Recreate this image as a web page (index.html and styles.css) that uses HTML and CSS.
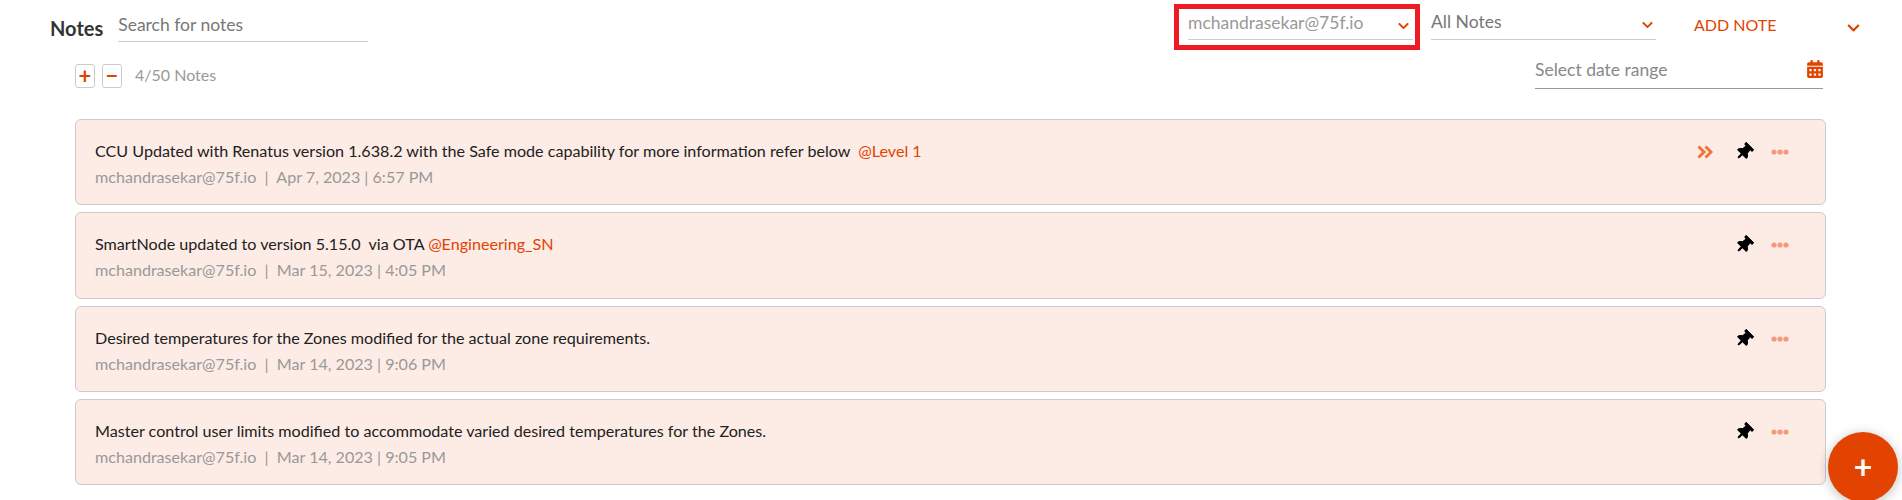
FILE: index.html
```html
<!DOCTYPE html>
<html lang="en">
<head>
  <meta charset="UTF-8">
  <title>Notes</title>
  <link rel="stylesheet" href="styles.css">
</head>
<body>
  <svg class="icon-defs" aria-hidden="true">
    <symbol id="chevron" viewBox="0 0 448 512"><path d="M207.029 381.476L12.686 187.132c-9.373-9.373-9.373-24.569 0-33.941l22.667-22.667c9.357-9.357 24.522-9.375 33.901-.04L224 284.505l154.745-154.021c9.379-9.335 24.544-9.317 33.901.04l22.667 22.667c9.373 9.373 9.373 24.569 0 33.941L240.971 381.476c-9.373 9.372-24.569 9.372-33.942 0z"/></symbol>
    <symbol id="pin" viewBox="0 0 384 512"><path d="M298.028 214.267L285.793 96H328c13.255 0 24-10.745 24-24V24c0-13.255-10.745-24-24-24H56C42.745 0 32 10.745 32 24v48c0 13.255 10.745 24 24 24h42.207L85.972 214.267C37.465 236.82 0 277.261 0 328c0 13.255 10.745 24 24 24h136v104.007c0 1.242.289 2.467.845 3.578l24 48c2.941 5.882 11.364 5.893 14.311 0l24-48a8.008 8.008 0 0 0 .845-3.578V352h136c13.255 0 24-10.745 24-24-.001-51.183-37.983-91.42-85.973-113.733z"/></symbol>
    <symbol id="dots" viewBox="0 0 18 6"><circle cx="3" cy="3" r="2.6"/><circle cx="9" cy="3" r="2.6"/><circle cx="15" cy="3" r="2.6"/></symbol>
    <symbol id="calendar" viewBox="0 0 448 512"><path d="M0 464c0 26.5 21.5 48 48 48h352c26.5 0 48-21.5 48-48V192H0v272zm320-196c0-6.6 5.4-12 12-12h40c6.6 0 12 5.4 12 12v40c0 6.6-5.4 12-12 12h-40c-6.6 0-12-5.4-12-12v-40zm0 128c0-6.6 5.4-12 12-12h40c6.6 0 12 5.4 12 12v40c0 6.6-5.4 12-12 12h-40c-6.6 0-12-5.4-12-12v-40zM192 268c0-6.6 5.4-12 12-12h40c6.6 0 12 5.4 12 12v40c0 6.6-5.4 12-12 12h-40c-6.6 0-12-5.4-12-12v-40zm0 128c0-6.6 5.4-12 12-12h40c6.6 0 12 5.4 12 12v40c0 6.6-5.4 12-12 12h-40c-6.6 0-12-5.4-12-12v-40zM64 268c0-6.6 5.4-12 12-12h40c6.6 0 12 5.4 12 12v40c0 6.6-5.4 12-12 12H76c-6.6 0-12-5.4-12-12v-40zm0 128c0-6.6 5.4-12 12-12h40c6.6 0 12 5.4 12 12v40c0 6.6-5.4 12-12 12H76c-6.6 0-12-5.4-12-12v-40zM400 64h-48V16c0-8.8-7.2-16-16-16h-32c-8.8 0-16 7.2-16 16v48H160V16c0-8.8-7.2-16-16-16h-32c-8.8 0-16 7.2-16 16v48H48C21.5 64 0 85.5 0 112v48h448v-48c0-26.5-21.5-48-48-48z"/></symbol>
  </svg>

  <div class="page">
    <header class="toolbar">
      <h1 class="title">Notes</h1>
      <div class="search">Search for notes</div>
      <div class="highlight">
        <div class="select select-user">
          <span>mchandrasekar@75f.io</span>
          <svg class="chevron"><use href="#chevron"/></svg>
        </div>
      </div>
      <div class="select select-type">
        <span>All Notes</span>
        <svg class="chevron"><use href="#chevron"/></svg>
      </div>
      <div class="add-note">
        <span>ADD NOTE</span>
        <svg class="chevron chevron-add"><use href="#chevron"/></svg>
      </div>
    </header>

    <div class="subbar">
      <button class="step-btn">+</button>
      <button class="step-btn">&minus;</button>
      <span class="count">4/50 Notes</span>
      <div class="date-range">
        <span>Select date range</span>
        <svg class="calendar"><use href="#calendar"/></svg>
      </div>
    </div>

    <main class="notes">
      <article class="note">
        <div class="note-body">
          <p class="note-text">CCU Updated with Renatus version 1.638.2 with the Safe mode capability for more information refer below &nbsp;<span class="tag">@Level 1</span></p>
          <p class="note-meta">mchandrasekar@75f.io &nbsp;|&nbsp; Apr 7, 2023 | 6:57 PM</p>
        </div>
        <div class="note-actions">
          <svg class="expand" viewBox="0 0 16 14"><path d="M1.500 1.500 7 7l-5.500 5.500M8.500 1.500 14 7l-5.500 5.500"/></svg>
          <svg class="pin"><use href="#pin"/></svg>
          <svg class="dots"><use href="#dots"/></svg>
        </div>
      </article>
      <article class="note">
        <div class="note-body">
          <p class="note-text">SmartNode updated to version 5.15.0 &nbsp;via OTA <span class="tag">@Engineering_SN</span></p>
          <p class="note-meta">mchandrasekar@75f.io &nbsp;|&nbsp; Mar 15, 2023 | 4:05 PM</p>
        </div>
        <div class="note-actions">
          <svg class="pin"><use href="#pin"/></svg>
          <svg class="dots"><use href="#dots"/></svg>
        </div>
      </article>
      <article class="note">
        <div class="note-body">
          <p class="note-text">Desired temperatures for the Zones modified for the actual zone requirements.</p>
          <p class="note-meta">mchandrasekar@75f.io &nbsp;|&nbsp; Mar 14, 2023 | 9:06 PM</p>
        </div>
        <div class="note-actions">
          <svg class="pin"><use href="#pin"/></svg>
          <svg class="dots"><use href="#dots"/></svg>
        </div>
      </article>
      <article class="note">
        <div class="note-body">
          <p class="note-text">Master control user limits modified to accommodate varied desired temperatures for the Zones.</p>
          <p class="note-meta">mchandrasekar@75f.io &nbsp;|&nbsp; Mar 14, 2023 | 9:05 PM</p>
        </div>
        <div class="note-actions">
          <svg class="pin"><use href="#pin"/></svg>
          <svg class="dots"><use href="#dots"/></svg>
        </div>
      </article>
    </main>

    <button class="fab">+</button>
  </div>
</body>
</html>
```

FILE: styles.css
```css
body {
  margin: 0;
  font-family: 'Lato', sans-serif;
  font-size: 16px;
  color: #212121;
  background-color: #fff;
}
.icon-defs {
  display: none;
}
.page {
  position: relative;
  height: 100vh;
  overflow: hidden;
}
/* Top bar */
.toolbar {
  display: flex;
  align-items: flex-start;
  height: 50px;
  padding: 4px 0 0 50px;
  box-sizing: border-box;
}
.title {
  margin: 12px 0 0;
  font-size: 20px;
  line-height: 24px;
  font-weight: 700;
  color: #333;
}
.search {
  width: 250px;
  height: 38px;
  margin-left: 15px;
  box-sizing: border-box;
  padding-top: 11px;
  font-size: 17.5px;
  line-height: 20px;
  color: #777;
  border-bottom: 1px solid #ccc;
}
.highlight {
  margin-left: auto;
  width: 246px;
  height: 46px;
  box-sizing: border-box;
  padding-left: 9px;
  border: 5px solid #ed1c24;
}
.select {
  display: flex;
  align-items: center;
  justify-content: space-between;
  width: 225px;
  box-sizing: border-box;
  font-size: 17.5px;
  color: #777;
  border-bottom: 1px solid #ccc;
}
.select-user {
  height: 31px;
  padding: 0 4px 4px 0;
  color: #999;
}
.select-type {
  height: 36px;
  margin-left: 11px;
  padding-right: 3px;
}
.chevron {
  width: 11px;
  height: 12px;
  margin-top: 7px;
  fill: #e24301;
}
.add-note {
  display: flex;
  align-items: center;
  justify-content: space-between;
  width: 166px;
  height: 40px;
  margin: 0 42px 0 38px;
  font-size: 16px;
  color: #e24301;
}
.chevron-add {
  width: 13px;
  height: 14px;
}
/* Count row */
.subbar {
  display: flex;
  align-items: flex-start;
  height: 39px;
  padding: 0 79px 0 75px;
}
.step-btn {
  width: 20px;
  height: 24px;
  margin: 14px 7px 0 0;
  padding: 0;
  font-family: inherit;
  font-size: 22px;
  line-height: 20px;
  font-weight: 700;
  color: #e24301;
  background-color: #fff;
  border: 1px solid #ccc;
  border-radius: 3px;
}
.count {
  margin: 15px 0 0 6px;
  line-height: 20px;
  color: #999;
}
.date-range {
  display: flex;
  align-items: center;
  justify-content: space-between;
  width: 288px;
  height: 39px;
  margin-left: auto;
  box-sizing: border-box;
  font-size: 17.5px;
  color: #888;
  border-bottom: 1px solid #999;
}
.calendar {
  width: 16px;
  height: 18px;
  fill: #e24301;
}
/* Note cards */
.notes {
  display: flex;
  flex-direction: column;
  gap: 7px;
  width: 1751px;
  margin: 30px 0 0 75px;
}
.note {
  display: flex;
  justify-content: space-between;
  height: 86.33px;
  box-sizing: border-box;
  padding: 20px 36px 0 19px;
  background-color: #fdebe5;
  border: 1px solid #ccc;
  border-radius: 6px;
}
.note-text {
  margin: 0;
  font-size: 16.13px;
  line-height: 22px;
  color: #212121;
}
.note-meta {
  margin: 4px 0 0;
  font-size: 16.1px;
  line-height: 22px;
  color: #999;
}
.tag {
  color: #e24301;
}
.note-actions {
  display: flex;
  align-items: center;
  height: 22px;
  margin-top: 1px;
}
.expand {
  width: 16px;
  height: 14px;
  margin-right: 24px;
  fill: none;
  stroke: #f0743e;
  stroke-width: 3;
}
.pin {
  width: 14px;
  height: 18px;
  margin-right: 20px;
  transform: rotate(45deg);
  fill: #000;
}
.dots {
  width: 18px;
  height: 6px;
  fill: #f79a7b;
}
/* Floating add button */
.fab {
  position: absolute;
  left: 1828px;
  top: 432px;
  width: 70px;
  height: 70px;
  padding: 0;
  font-family: inherit;
  font-size: 32px;
  font-weight: 700;
  line-height: 70px;
  color: #fff;
  background-color: #e24301;
  border: none;
  border-radius: 50%;
  box-shadow: 0 2px 12px rgba(0, 0, 0, 0.25);
}
```
